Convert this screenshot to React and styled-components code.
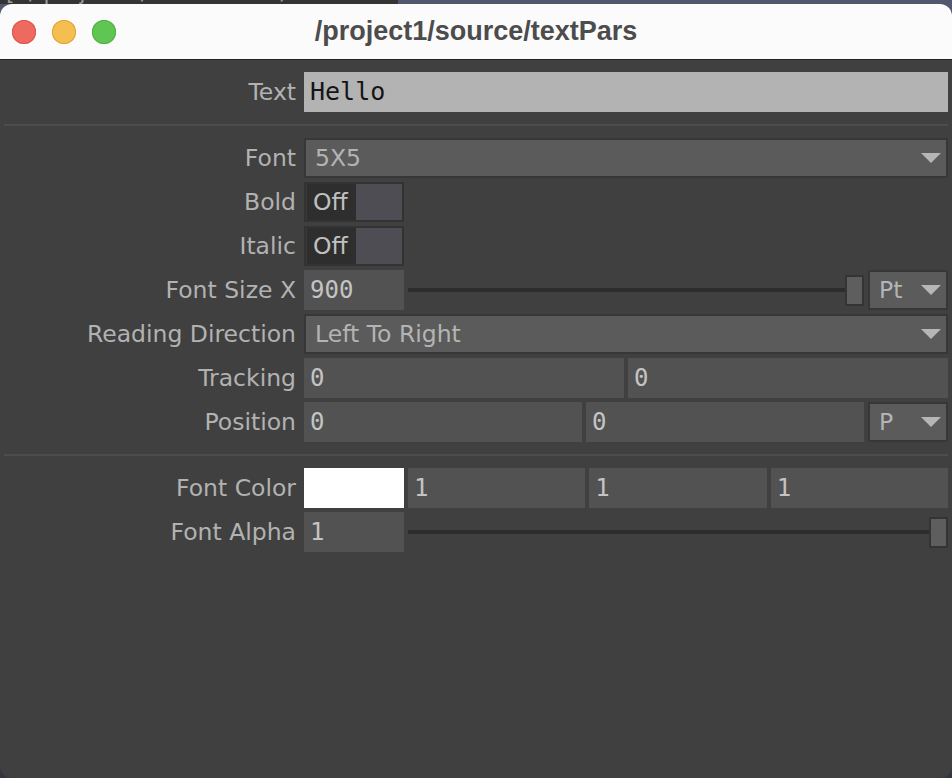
import React from 'react';
import styled, { createGlobalStyle } from 'styled-components';

const GlobalStyle = createGlobalStyle`
    html, body {
        margin: 0;
        padding: 0;
        background: #50576e;
        height: 100%;
    }
    #root {
        height: 100%;
    }
`;

const Page = styled.div`
    display: flex;
    flex-direction: column;
    height: 778px;
    width: 952px;
    overflow: hidden;
    background: linear-gradient(#50576e 0, #50576e 700px, #34363d 700px);
`;

const Behind = styled.div`
    height: 4px;
    display: flex;
    overflow: hidden;
`;

const Crumbs = styled.div`
    width: 392px;
    background: #343434;
    color: #9a9a9a;
    font-family: "DejaVu Sans", sans-serif;
    font-size: 22px;
    line-height: 22px;
    margin-top: -18px;
    padding-left: 6px;
    white-space: nowrap;
`;

const Window = styled.div`
    flex: 1;
    display: flex;
    flex-direction: column;
    border-radius: 12px;
    overflow: hidden;
    background: #404040;
`;

const TitleBar = styled.div`
    height: 55px;
    flex-shrink: 0;
    background: #fbfbfb;
    border-bottom: 1px solid #222;
    display: flex;
    align-items: center;
    position: relative;
`;

const Lights = styled.div`
    display: flex;
    gap: 16px;
    padding-left: 12px;
`;

const Light = styled.span`
    width: 24px;
    height: 24px;
    border-radius: 50%;
    background: ${p => p.$color};
    box-shadow: inset 0 0 0 1px ${p => p.$edge};
`;

const Title = styled.div`
    position: absolute;
    left: 0;
    right: 0;
    text-align: center;
    font-family: "Liberation Sans", Arial, sans-serif;
    font-weight: 700;
    font-size: 27px;
    color: #4c4c4c;
    pointer-events: none;
`;

const Panel = styled.div`
    flex: 1;
    padding: 12px 4px;
    display: flex;
    flex-direction: column;
    gap: 4px;
    font-family: "DejaVu Sans", sans-serif;
`;

const Divider = styled.div`
    height: 2px;
    background: #4c4c4c;
    margin: 8px 0;
`;

const Row = styled.div`
    display: grid;
    grid-template-columns: 292px 1fr;
    column-gap: 8px;
    height: 40px;
`;

const Label = styled.div`
    text-align: right;
    line-height: 40px;
    font-size: 23.5px;
    color: #b2b2b2;
    white-space: nowrap;
`;

const Controls = styled.div`
    display: flex;
    gap: 4px;
    min-width: 0;
`;

const TextField = styled.div`
    flex: 1;
    background: #b3b3b3;
    color: #151515;
    font-family: "DejaVu Sans Mono", monospace;
    font-size: 25px;
    line-height: 40px;
    padding-left: 6px;
`;

const NumField = styled.div`
    ${p => (p.$width ? `width: ${p.$width}px; flex-shrink: 0;` : 'flex: 1;')}
    box-sizing: border-box;
    background: #525252;
    color: #c4c4c4;
    font-family: "DejaVu Sans Mono", monospace;
    font-size: 24px;
    line-height: 40px;
    padding-left: 6px;
`;

const Swatch = styled.div`
    width: 100px;
    flex-shrink: 0;
    background: ${p => p.$color};
`;

const Menu = styled.div`
    ${p => (p.$width ? `width: ${p.$width}px; flex-shrink: 0;` : 'flex: 1;')}
    box-sizing: border-box;
    display: flex;
    align-items: center;
    justify-content: space-between;
    background: #5b5b5b;
    border: 2px solid #373737;
    color: #b4b4b4;
    font-size: 23.5px;
    padding: 0 5px 0 9px;
`;

const Arrow = () => (
    <svg width="20" height="10" viewBox="0 0 20 10">
        <polygon points="0,0 20,0 10,10" fill="#b6b6b6" />
    </svg>
);

const Toggle = styled.div`
    width: 100px;
    box-sizing: border-box;
    display: flex;
    border: 2px solid #333;
    background: #4e4d54;
`;

const ToggleState = styled.div`
    width: 50px;
    background: #2e2e2e;
    border-left: 1px solid #3a3a3a;
    color: #c0c0c0;
    font-size: 23.5px;
    line-height: 36px;
    padding-left: 6px;
    box-sizing: border-box;
`;

const Slider = styled.div`
    flex: 1;
    display: flex;
    align-items: center;
`;

const Track = styled.div`
    flex: 1;
    height: 4px;
    background: #2d2d2d;
`;

const Handle = styled.div`
    width: 19px;
    height: 31px;
    box-sizing: border-box;
    background: #5e5e5e;
    border: 2px solid #343434;
    flex-shrink: 0;
`;

const Param = ({ label, children }) => (
    <Row>
        <Label>{label}</Label>
        <Controls>{children}</Controls>
    </Row>
);

const App = () => {
    return (
        <Page>
            <GlobalStyle />
            <Behind>
                <Crumbs>[: / project1 / container1 / &gt; &gt;</Crumbs>
            </Behind>
            <Window>
                <TitleBar>
                    <Lights>
                        <Light $color="#ee6a5e" $edge="#d9564b" />
                        <Light $color="#f5bf4f" $edge="#d9a53d" />
                        <Light $color="#61c554" $edge="#4fae44" />
                    </Lights>
                    <Title>/project1/source/textPars</Title>
                </TitleBar>
                <Panel>
                    <Param label="Text">
                        <TextField>Hello</TextField>
                    </Param>
                    <Divider />
                    <Param label="Font">
                        <Menu>5X5<Arrow /></Menu>
                    </Param>
                    <Param label="Bold">
                        <Toggle><ToggleState>Off</ToggleState></Toggle>
                    </Param>
                    <Param label="Italic">
                        <Toggle><ToggleState>Off</ToggleState></Toggle>
                    </Param>
                    <Param label="Font Size X">
                        <NumField $width={100}>900</NumField>
                        <Slider>
                            <Track />
                            <Handle />
                        </Slider>
                        <Menu $width={80}>Pt<Arrow /></Menu>
                    </Param>
                    <Param label="Reading Direction">
                        <Menu>Left To Right<Arrow /></Menu>
                    </Param>
                    <Param label="Tracking">
                        <NumField>0</NumField>
                        <NumField>0</NumField>
                    </Param>
                    <Param label="Position">
                        <NumField>0</NumField>
                        <NumField>0</NumField>
                        <Menu $width={80}>P<Arrow /></Menu>
                    </Param>
                    <Divider />
                    <Param label="Font Color">
                        <Swatch $color="#ffffff" />
                        <NumField>1</NumField>
                        <NumField>1</NumField>
                        <NumField>1</NumField>
                    </Param>
                    <Param label="Font Alpha">
                        <NumField $width={100}>1</NumField>
                        <Slider>
                            <Track />
                            <Handle />
                        </Slider>
                    </Param>
                </Panel>
            </Window>
        </Page>
    );
};

export default App;
